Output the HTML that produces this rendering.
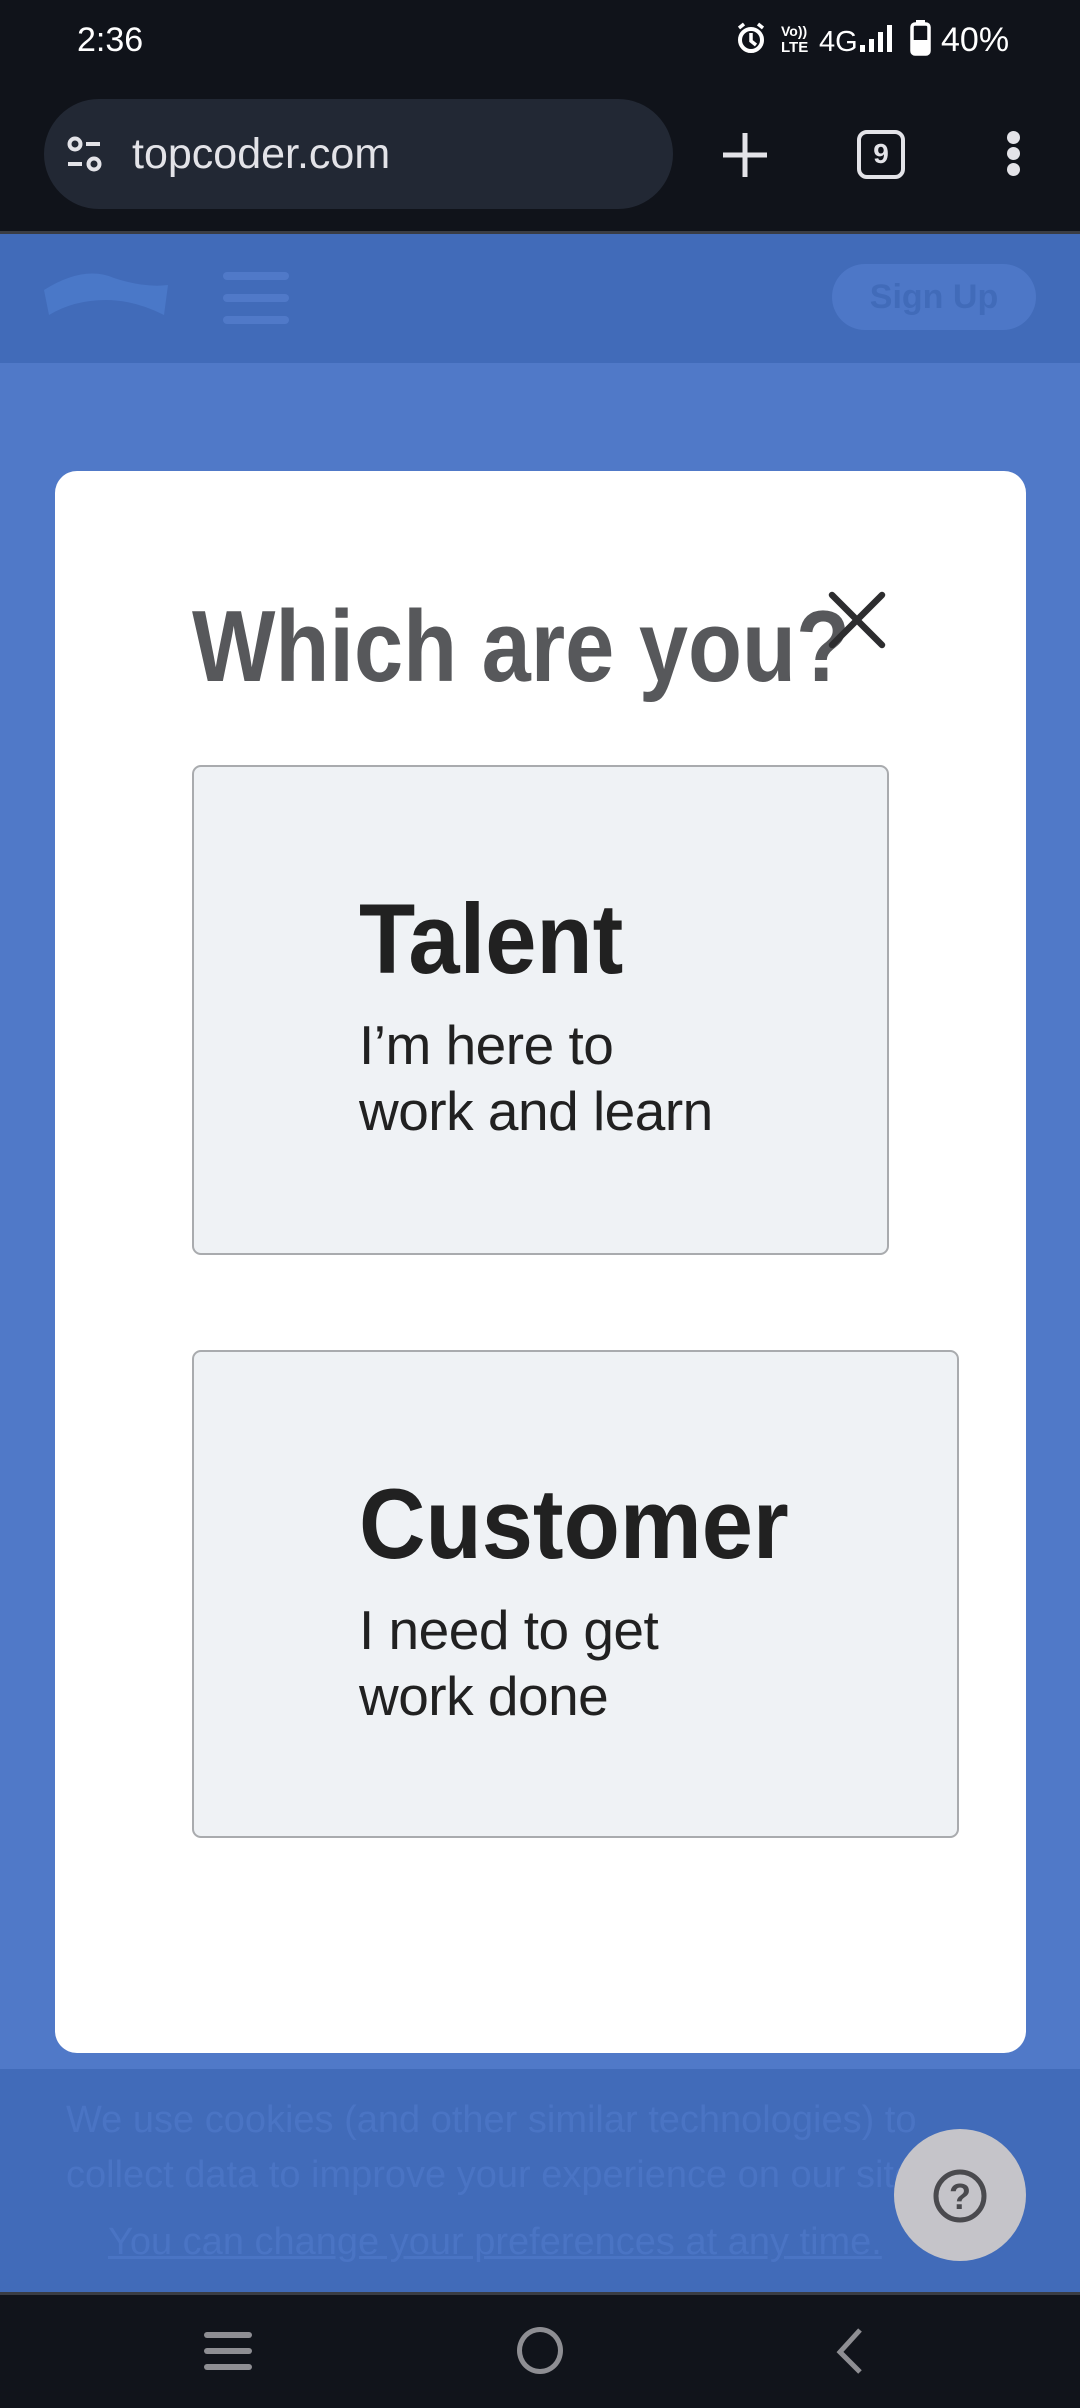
<!DOCTYPE html>
<html><head><meta charset="utf-8"><style>
*{margin:0;padding:0;box-sizing:border-box}
body{width:1080px;height:2408px;overflow:hidden;background:#5079c8;font-family:"Liberation Sans",sans-serif;position:relative}
.abs{position:absolute}
</style></head><body>
<div class="abs" style="left:0;top:0;width:1080px;height:231px;background:#10131a"></div>
<div class="abs" style="left:0;top:231px;width:1080px;height:3px;background:#3a3d44"></div>
<div class="abs" style="left:77px;top:21px;color:#fff;font-size:34px;">2:36</div>
<svg class="abs" style="left:730px;top:18px" width="290" height="42" viewBox="730 18 290 42">
 <circle cx="751" cy="40" r="11" fill="none" stroke="#fff" stroke-width="4"/>
 <path d="M751 33v8l5 4M739 28l5-4M763 28l-5-4" stroke="#fff" stroke-width="3.5" fill="none"/>
 <text x="781" y="36" font-size="14" font-weight="bold" fill="#fff" font-family="Liberation Sans">Vo))</text>
 <text x="781" y="52" font-size="15" font-weight="bold" fill="#fff" font-family="Liberation Sans">LTE</text>
 <text x="819" y="51" font-size="29" fill="#fff" font-family="Liberation Sans">4G</text>
 <rect x="860" y="45" width="5" height="7" fill="#fff"/><rect x="869" y="39" width="5" height="13" fill="#fff"/><rect x="878" y="32" width="5" height="20" fill="#fff"/><rect x="887" y="25" width="5" height="27" fill="#fff"/>
 <rect x="912" y="24" width="17" height="30" rx="3" fill="none" stroke="#fff" stroke-width="3.5"/>
 <rect x="916" y="20" width="9" height="4" fill="#fff"/><rect x="912" y="40" width="17" height="14" fill="#fff"/>
 <text x="941" y="51" font-size="34" fill="#fff" font-family="Liberation Sans">40%</text>
</svg>
<div class="abs" style="left:44px;top:99px;width:629px;height:110px;border-radius:55px;background:#222834"></div>
<svg class="abs" style="left:66px;top:136px" width="44" height="40" viewBox="0 0 44 40">
 <circle cx="9" cy="8" r="5.5" fill="none" stroke="#e3e3e8" stroke-width="4"/>
 <path d="M20 8h14M2 28h14" stroke="#e3e3e8" stroke-width="4"/>
 <circle cx="28" cy="28" r="5.5" fill="none" stroke="#e3e3e8" stroke-width="4"/>
</svg>
<div class="abs" style="left:132px;top:130px;color:#e3e3e8;font-size:43px;">topcoder.com</div>
<svg class="abs" style="left:720px;top:130px" width="50" height="50"><path d="M25 3v44M3 25h44" stroke="#e3e3e8" stroke-width="5"/></svg>
<div class="abs" style="left:857px;top:130px;width:48px;height:49px;border:4.5px solid #e3e3e8;border-radius:10px;color:#e3e3e8;font-size:28px;font-weight:bold;text-align:center;line-height:40px">9</div>
<div class="abs" style="left:1007px;top:131px;width:13px;height:13px;border-radius:50%;background:#e3e3e8"></div>
<div class="abs" style="left:1007px;top:147px;width:13px;height:13px;border-radius:50%;background:#e3e3e8"></div>
<div class="abs" style="left:1007px;top:163px;width:13px;height:13px;border-radius:50%;background:#e3e3e8"></div>
<div class="abs" style="left:0;top:234px;width:1080px;height:129px;background:#416bb9"></div>
<svg class="abs" style="left:44px;top:270px" width="124" height="50" viewBox="0 0 124 50">
 <path d="M0 20Q40 -5 70 8Q100 18 124 15L120 45Q90 30 62 30Q30 30 5 45Z" fill="#4a78c8"/>
</svg>
<div class="abs" style="left:223px;top:272px;width:66px;height:8px;border-radius:4px;background:#5079c8"></div>
<div class="abs" style="left:223px;top:294px;width:66px;height:8px;border-radius:4px;background:#5079c8"></div>
<div class="abs" style="left:223px;top:316px;width:66px;height:8px;border-radius:4px;background:#5079c8"></div>
<div class="abs" style="left:832px;top:264px;width:204px;height:66px;border-radius:33px;background:#4d77c7;color:#416bb9;font-size:34px;font-weight:bold;text-align:center;line-height:66px">Sign Up</div>
<div class="abs" style="left:55px;top:471px;width:971px;height:1582px;background:#fff;border-radius:22px"></div>
<div class="abs" style="left:192px;top:597px;color:#57585b;font-size:101px;font-weight:bold;line-height:1;white-space:nowrap;transform:scaleX(0.875);transform-origin:left">Which are you?</div>
<svg class="abs" style="left:826px;top:589px" width="62" height="62"><path d="M6 6L56 56M56 6L6 56" stroke="#2d2d2f" stroke-width="6.5" stroke-linecap="round"/></svg>
<div class="abs" style="left:192px;top:765px;width:697px;height:490px;background:#eff2f5;border:2px solid #a9abae;border-radius:9px"></div>
<div class="abs" style="left:359px;top:889px;color:#212121;font-size:99px;font-weight:bold;line-height:1;transform:scaleX(0.93);transform-origin:left">Talent</div>
<div class="abs" style="left:359px;top:1012px;color:#212121;font-size:55px;line-height:66px;letter-spacing:-0.5px">I’m here to<br>work and learn</div>
<div class="abs" style="left:192px;top:1350px;width:767px;height:488px;background:#eff2f5;border:2px solid #a9abae;border-radius:9px"></div>
<div class="abs" style="left:359px;top:1474px;color:#212121;font-size:99px;font-weight:bold;line-height:1;transform:scaleX(0.93);transform-origin:left">Customer</div>
<div class="abs" style="left:359px;top:1597px;color:#212121;font-size:55px;line-height:66px;letter-spacing:-0.5px">I need to get<br>work done</div>
<div class="abs" style="left:0;top:2069px;width:1080px;height:223px;background:#416bb9"></div>
<div class="abs" style="left:66px;top:2093px;color:#4a74c4;font-size:38px;line-height:55px;white-space:nowrap">We use cookies (and other similar technologies) to<br>collect data to improve your experience on our site. X</div>
<div class="abs" style="left:108px;top:2221px;color:#4a74c4;font-size:38px;text-decoration:underline;white-space:nowrap">You can change your preferences at any time.</div>
<div class="abs" style="left:894px;top:2129px;width:132px;height:132px;border-radius:50%;background:#c5c4c9"></div>
<svg class="abs" style="left:930px;top:2166px" width="60" height="60"><circle cx="30" cy="30" r="24" fill="none" stroke="#4a4a4e" stroke-width="5"/><text x="30" y="43" text-anchor="middle" font-size="36" font-weight="bold" fill="#4a4a4e" font-family="Liberation Sans">?</text></svg>
<div class="abs" style="left:0;top:2292px;width:1080px;height:3px;background:#3a3d44"></div>
<div class="abs" style="left:0;top:2295px;width:1080px;height:113px;background:#11141b"></div>
<div class="abs" style="left:204px;top:2332px;width:48px;height:6px;border-radius:3px;background:#8e8e93"></div>
<div class="abs" style="left:204px;top:2348px;width:48px;height:6px;border-radius:3px;background:#8e8e93"></div>
<div class="abs" style="left:204px;top:2364px;width:48px;height:6px;border-radius:3px;background:#8e8e93"></div>
<div class="abs" style="left:517px;top:2327px;width:46px;height:47px;border-radius:50%;border:5px solid #8e8e93"></div>
<svg class="abs" style="left:830px;top:2326px" width="40" height="50"><path d="M30 4L10 26L30 46" stroke="#8e8e93" stroke-width="5" fill="none"/></svg>
</body></html>
